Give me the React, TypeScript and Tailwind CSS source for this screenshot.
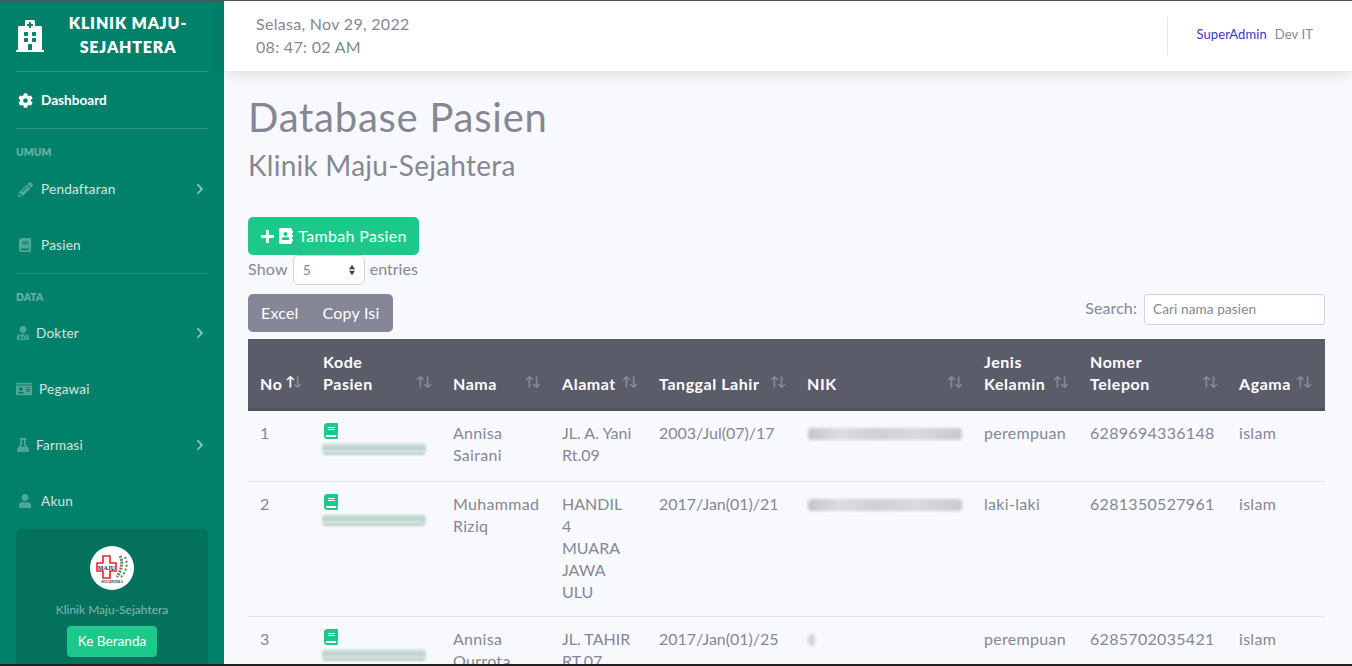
import { FaAddressBook, FaBook, FaChevronRight, FaCog, FaFlask, FaHospital, FaIdCard, FaPencilAlt, FaPlus, FaUser, FaUserMd } from 'react-icons/fa';

const columns = [
  { label: ['No'], width: 'w-[63px]', active: true },
  { label: ['Kode', 'Pasien'], width: 'w-[130px]' },
  { label: ['Nama'], width: 'w-[109px]' },
  { label: ['Alamat'], width: 'w-[97px]' },
  { label: ['Tanggal Lahir'], width: 'w-[148px]' },
  { label: ['NIK'], width: 'w-[177px]' },
  { label: ['Jenis', 'Kelamin'], width: 'w-[106px]' },
  { label: ['Nomer', 'Telepon'], width: 'w-[149px]' },
  { label: ['Agama'], width: 'w-[98px]' },
];

const patients = [
  { no: 1, nama: ['Annisa', 'Sairani'], alamat: ['JL. A. Yani', 'Rt.09'], lahir: '2003/Jul(07)/17', nik: 'w-[154px]', jk: 'perempuan', telp: '6289694336148', height: 'h-[72px]' },
  { no: 2, nama: ['Muhammad', 'Riziq'], alamat: ['HANDIL', '4', 'MUARA', 'JAWA', 'ULU'], lahir: '2017/Jan(01)/21', nik: 'w-[154px]', jk: 'laki-laki', telp: '6281350527961', height: 'h-[135px]' },
  { no: 3, nama: ['Annisa', 'Qurrota'], alamat: ['JL. TAHIR', 'RT.07'], lahir: '2017/Jan(01)/25', nik: 'w-[7px] -ml-[2px]', jk: 'perempuan', telp: '6285702035421', height: 'h-[71px]' },
];

function NavItem({ icon, label, arrow, gap = 'gap-[9px]', indent = 'pl-[18px]' }: { icon: React.ReactNode; label: string; arrow?: boolean; gap?: string; indent?: string }) {
  return (
    <div className={`flex h-14 items-center pr-[18px] text-[13.6px] tracking-[0.2px] text-white/80 ${gap} ${indent}`}>
      <span className="flex text-white/30">{icon}</span>
      <span className="flex-1">{label}</span>
      {arrow && <FaChevronRight size={12} className="text-white/50" />}
    </div>
  );
}

function SortIcon({ active, flush }: { active?: boolean; flush?: boolean }) {
  return (
    <span className={`mb-[7px] flex text-[13px] leading-none ${flush ? '' : '-mr-[4px]'}`}>
      <span className={active ? 'text-white' : 'text-white/30'}>↑</span>
      <span className="-ml-[3px] text-white/30">↓</span>
    </span>
  );
}

function ClinicLogo() {
  return (
    <svg viewBox="0 0 44 44" className="h-11 w-11">
      <circle cx="22" cy="22" r="22" fill="#fff" />
      <path d="M13 10h7v7h6v8h-6v7h-7v-7H7v-8h6z" fill="#fff" stroke="#e8232f" strokeWidth="1.6" />
      <rect x="8" y="18" width="17" height="6" fill="#fff" />
      <text x="16.5" y="23.5" textAnchor="middle" fontSize="6" fontWeight="700" fontFamily="Liberation Serif, serif" fill="#222">MAJU</text>
      <path d="M30 10c3 5 2 13-3 21" fill="none" stroke="#777" strokeWidth="3" strokeDasharray="2 1" />
      <path d="M35 11c3 6 2 14-4 20" fill="none" stroke="#3f9c35" strokeWidth="2" strokeDasharray="2 2" />
      <text x="22" y="37" textAnchor="middle" fontSize="3.6" fontWeight="700" fontFamily="Liberation Serif, serif" fill="#222">SEJAHTERA</text>
    </svg>
  );
}

export default function App() {
  return (
    <div className="flex h-screen flex-col overflow-hidden bg-[#f8f9fc] font-['Lato',sans-serif] text-[#858796]">
      <div className="h-px shrink-0 bg-[#555]" />
      <div className="flex min-h-0 flex-1">
        <aside className="w-[224px] shrink-0 bg-[#02816a] px-4 text-white">
          <div className="flex h-[70px] items-center gap-[7px] pb-[3px]">
            <FaHospital size={32} className="-ml-[2px] mt-[3px] shrink-0" />
            <div className="-ml-[5px] flex-1 text-center text-base font-extrabold uppercase leading-6 tracking-[0.8px]">Klinik Maju-<br />Sejahtera</div>
          </div>
          <div className="border-t border-white/15" />
          <div className="-mx-4">
            <div className="flex h-14 items-center gap-[8px] pl-[18px] text-[13.6px] font-bold">
              <FaCog size={15} /> Dashboard
            </div>
          </div>
          <div className="border-t border-white/15" />
          <div className="-mx-4">
            <div className="pl-4 pt-[17px] text-[10.4px] font-extrabold uppercase leading-3 text-white/40">Umum</div>
            <div className="mt-[3px]"><NavItem icon={<FaPencilAlt size={15} />} label="Pendaftaran" arrow gap="gap-2" /></div>
            <NavItem icon={<FaBook size={14} />} label="Pasien" />
          </div>
          <div className="border-t border-white/15" />
          <div className="-mx-4">
            <div className="pl-4 pt-[17px] text-[10.4px] font-extrabold uppercase leading-3 text-white/40">Data</div>
            <div className="mt-[2px]"><NavItem icon={<FaUserMd size={14} />} label="Dokter" arrow indent="pl-4" gap="gap-[6px]" /></div>
            <NavItem icon={<FaIdCard size={16} />} label="Pegawai" indent="pl-4" gap="gap-[7px]" />
            <NavItem icon={<FaFlask size={14} />} label="Farmasi" arrow indent="pl-4" gap="gap-[6px]" />
            <NavItem icon={<FaUser size={14} />} label="Akun" />
          </div>
          <div className="flex h-[150px] flex-col items-center rounded-[5px] bg-[#03715b] pt-[17px]">
            <ClinicLogo />
            <div className="mt-[11px] text-xs leading-[18px] text-white/50">Klinik Maju-Sejahtera</div>
            <div className="mt-[7px] flex h-[31px] w-[90px] items-center justify-center rounded-[4px] bg-[#1cc88a] text-[13.6px] text-white">Ke Beranda</div>
          </div>
        </aside>

        <main className="min-w-0 flex-1">
          <header className="flex h-[70px] items-center bg-white pl-8 pr-[39px] shadow-[0_2px_14px_rgba(58,59,69,0.15)]">
            <div className="-mt-[3px] flex-1 text-base leading-[23px] tracking-[0.3px]">
              <div>Selasa, Nov 29, 2022</div>
              <div>08: 47: 02 AM</div>
            </div>
            <div className="flex h-[38px] items-center gap-2 border-l border-[#e3e6f0] pb-[2px] pl-7 text-[13px] tracking-[0.1px]">
              <span className="text-[#4433cc]">SuperAdmin</span>
              <span>Dev IT</span>
            </div>
          </header>

          <div className="pl-6 pr-[27px]">
            <h1 className="mt-[22px] text-[40px] leading-[48px] tracking-[0.75px]">Database Pasien</h1>
            <h2 className="mt-[7px] text-[28px] leading-[34px] tracking-[0.25px]">Klinik Maju-Sejahtera</h2>

            <div className="mt-[35px] flex h-[38px] w-[171px] items-center justify-center gap-[3px] rounded-[5px] bg-[#1cc88a] text-base tracking-[0.35px] text-white">
              <FaPlus size={15} /><FaAddressBook size={16} /><span className="ml-[1px]">Tambah Pasien</span>
            </div>

            <div className="flex h-[30px] items-center text-base tracking-[0.2px]">
              <span className="-mt-[2px] mr-[5px]">Show</span>
              <div className="flex h-[30px] w-[72px] items-center justify-between rounded-[5px] border border-[#d1d3e2] bg-white pl-[9px] pr-[8px] text-sm">
                5
                <svg viewBox="0 0 8 14" className="h-[12px] w-[8px]" fill="#444"><path d="M4 1l3.5 5h-7zM4 13l-3.5-5h7z" /></svg>
              </div>
              <span className="-mt-[2px] ml-[5px] tracking-normal">entries</span>
            </div>

            <div className="mt-[9px] flex items-start justify-between">
              <div className="flex h-[38px] items-center gap-[24px] rounded-[5px] bg-[#858796] px-[13px] text-base tracking-[0.2px] text-white">
                <span>Excel</span>
                <span>Copy Isi</span>
              </div>
              <div className="flex items-center gap-[7px] text-base tracking-[0.1px]">
                <span className="-mt-[3px]">Search:</span>
                <div className="flex h-[31px] w-[181px] items-center rounded-[3px] border border-[#d1d3e2] bg-white pl-2 text-[13.6px]">Cari nama pasien</div>
              </div>
            </div>

            <table className="mt-[7px] w-[1077px] table-fixed border-collapse text-left text-base leading-[22px] tracking-[0.3px]">
              <thead>
                <tr className="h-[70px] border-b-[3px] border-[#4f515d] bg-[#5a5c69] text-white">
                  {columns.map((col) => (
                    <th key={col.label[0]} className={`px-3 pb-[13px] align-bottom font-bold tracking-[0.55px] ${col.width}`}>
                      <div className="flex items-end justify-between">
                        <span>{col.label.map((line) => <div key={line}>{line}</div>)}</span>
                        <SortIcon active={col.active} flush={col.label[0] === 'Agama'} />
                      </div>
                    </th>
                  ))}
                </tr>
              </thead>
              <tbody>
                {patients.map((p) => (
                  <tr key={p.no} className={`border-b border-[#e3e6f0] ${p.height}`}>
                    <td className="px-3 pt-[11px] align-top">{p.no}</td>
                    <td className="px-3 pt-[12px] align-top">
                      <FaBook size={16} className="text-[#1cc88a]" />
                      <div className="-ml-[1px] mt-[4px] h-[12px] w-[104px] rounded-sm bg-[linear-gradient(180deg,#dfe9e6,#b5cfc8_45%,#dce7e4_70%,#a9c4bd)] blur-[1px]" />
                    </td>
                    <td className="px-3 pt-[11px] align-top">{p.nama.map((line) => <div key={line}>{line}</div>)}</td>
                    <td className="px-3 pt-[11px] align-top tracking-normal">{p.alamat.map((line) => <div key={line}>{line}</div>)}</td>
                    <td className="px-3 pt-[11px] align-top tracking-normal">{p.lahir}</td>
                    <td className="px-3 pt-[12px] align-top">
                      <div className={`ml-px mt-[5px] h-[12px] rounded-sm bg-[linear-gradient(90deg,#c4c5cb,#dcdde1_20%,#cfd0d5_45%,#d9dade_70%,#c9cacf)] blur-[1.5px] ${p.nik}`} />
                    </td>
                    <td className="px-3 pt-[11px] align-top">{p.jk}</td>
                    <td className="px-3 pt-[11px] align-top">{p.telp}</td>
                    <td className="px-3 pt-[11px] align-top">islam</td>
                  </tr>
                ))}
              </tbody>
            </table>
          </div>
        </main>
      </div>
      <div className="h-[2px] shrink-0 bg-[#222]" />
    </div>
  );
}
